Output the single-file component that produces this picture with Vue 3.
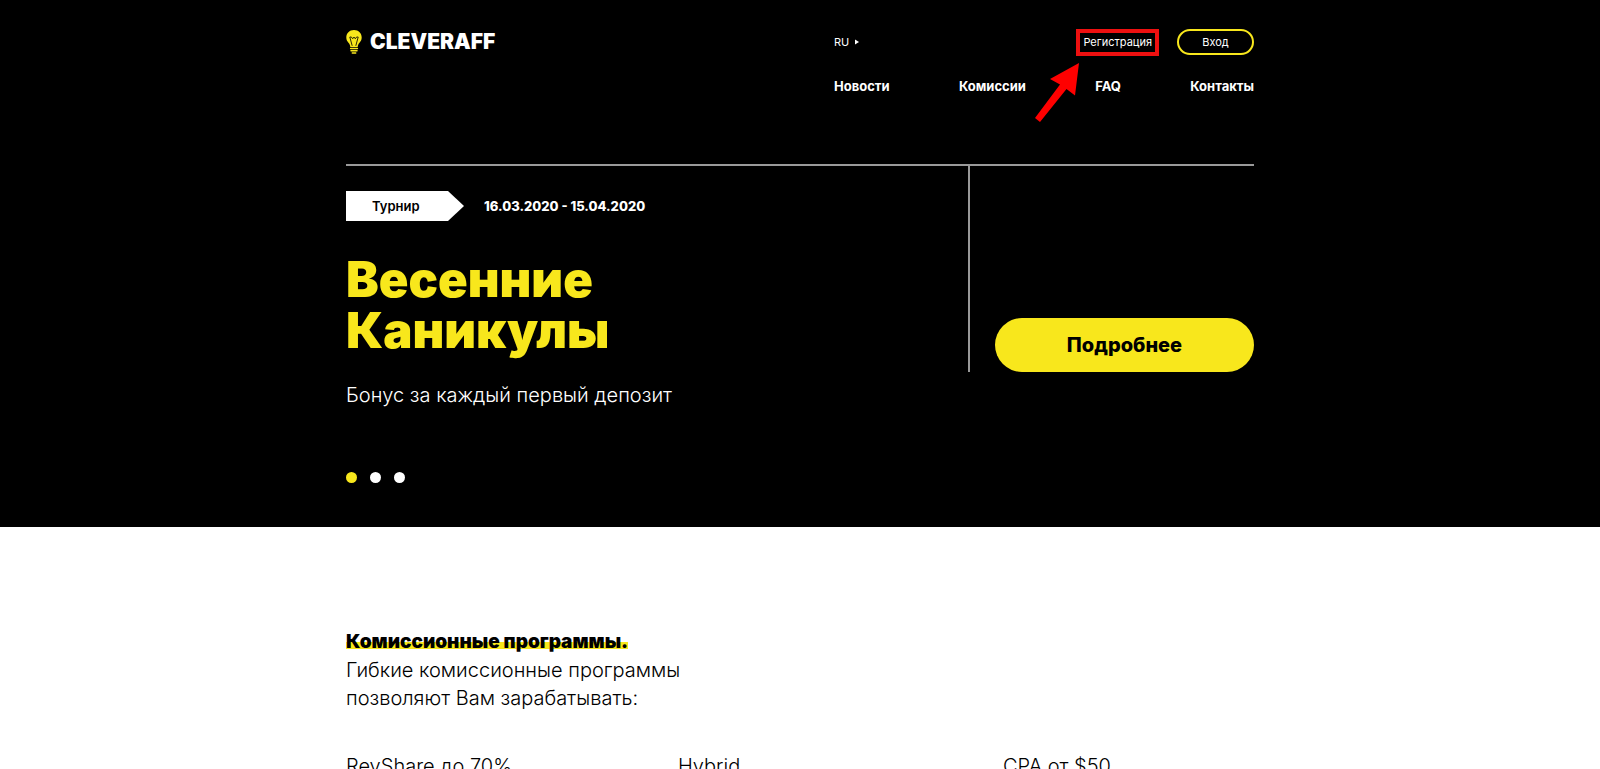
<script setup>
import { ref } from 'vue'

const nav = ['Новости', 'Комиссии', 'FAQ', 'Контакты']
const programs = ['RevShare до 70%', 'Hybrid', 'CPA от $50']
const slides = ['Слайд 1', 'Слайд 2', 'Слайд 3']
const active = ref(0)
</script>

<template>
  <div class="page">
    <div class="dark">
      <div class="container">
        <header class="header">
          <a href="#" class="logo">
            <svg class="bulb" viewBox="0 0 16 24" aria-hidden="true">
              <path d="M8 0C3.4 0 .3 3.400.3 7.500c0 2.500 1.100 4 2.400 5.500.9 1.100 1.400 2.100 1.600 4h7.400c.2-1.900.7-2.900 1.600-4 1.300-1.500 2.400-3 2.400-5.500C15.700 3.400 12.600 0 8 0Z" fill="#f8e71c" />
              <path d="M3.800 7 6.200 15.800M12.200 7 9.800 15.800M3.800 7h1.600l1.300 1.800L8 7l1.300 1.800L10.600 7h1.600" fill="none" stroke="#2c2806" stroke-width="1" />
              <path d="M4.600 18.600h6.800M5 20.800h6M6.300 22.900h3.400" stroke="#f8e71c" stroke-width="1.500" stroke-linecap="round" />
            </svg>
            <span>CLEVERAFF</span>
          </a>
          <div class="head-right">
            <div class="account">
              <button type="button" class="lang">
                RU
                <svg viewBox="0 0 4 6" aria-hidden="true"><path d="M0 0.500 4 3 0 5.500Z" fill="#fff" /></svg>
              </button>
              <div class="auth">
                <div class="register">
                  <a href="#">Регистрация</a>
                  <svg class="arrow" viewBox="0 0 46 60" aria-hidden="true">
                    <path d="M45 1 16 17 26 22.500 1 56 6 60 32.500 27 41 33.500Z" fill="#f00" />
                  </svg>
                </div>
                <button type="button" class="login">Вход</button>
              </div>
            </div>
            <nav class="nav">
              <a v-for="item in nav" :key="item" href="#">{{ item }}</a>
            </nav>
          </div>
        </header>

        <section class="hero">
          <div class="promo">
            <div class="meta">
              <span class="tag">Турнир</span>
              <span class="dates">16.03.2020 - 15.04.2020</span>
            </div>
            <h1>Весенние<br />Каникулы</h1>
            <p>Бонус за каждый первый депозит</p>
          </div>
          <div class="action">
            <button type="button" class="more">Подробнее</button>
          </div>
        </section>

        <div class="dots">
          <button
            v-for="(slide, i) in slides"
            :key="slide"
            type="button"
            :aria-label="slide"
            :class="{ active: active === i }"
            @click="active = i"
          ></button>
        </div>
      </div>
    </div>

    <main class="container programs">
      <h2><span>Комиссионные программы.</span></h2>
      <p class="lead">Гибкие комиссионные программы<br />позволяют Вам зарабатывать:</p>
      <div class="columns">
        <h3 v-for="program in programs" :key="program">{{ program }}</h3>
      </div>
    </main>
  </div>
</template>

<style>
html {
  height: 100%;
  overflow: hidden;
}
body {
  height: 100%;
  margin: 0;
  overflow: hidden;
  background: #fff;
}
</style>

<style scoped>
.page {
  font-family: Inter, "Liberation Sans", sans-serif;
  color: #000;
}
.page * {
  box-sizing: border-box;
}
a {
  color: inherit;
  text-decoration: none;
}
button {
  font: inherit;
  color: inherit;
  background: none;
  border: 0;
  padding: 0;
  cursor: pointer;
}
h1, h2, h3, p {
  margin: 0;
}
.container {
  max-width: 908px;
  margin: 0 auto;
}
.dark {
  background: #000;
  color: #fff;
  padding: 29px 0 44px;
}
.header {
  display: flex;
  justify-content: space-between;
  align-items: flex-start;
  padding-bottom: 68px;
}
.logo {
  display: flex;
  align-items: center;
  gap: 8px;
  font-size: 21px;
  line-height: 26px;
  font-weight: 900;
}
.bulb {
  width: 16px;
  height: 24px;
}
.head-right {
  width: 420px;
}
.account {
  display: flex;
  justify-content: space-between;
  align-items: flex-start;
  font-size: 11px;
}
.lang {
  display: flex;
  align-items: center;
  gap: 6px;
  height: 26px;
}
.lang svg {
  width: 4px;
  height: 6px;
}
.auth {
  display: flex;
  align-items: flex-start;
  gap: 18px;
}
.register {
  position: relative;
  display: flex;
  border: 4px solid #ed1010;
  padding: 0 3px;
  line-height: 19px;
}
.arrow {
  position: absolute;
  top: 29px;
  left: -46px;
  width: 46px;
  height: 60px;
}
.login {
  width: 77px;
  height: 26px;
  border: 2px solid #f8e71c;
  border-radius: 13px;
}
.nav {
  display: flex;
  justify-content: space-between;
  margin-top: 20px;
  font-size: 13px;
  line-height: 20px;
  font-weight: 700;
}
.hero {
  display: grid;
  grid-template-columns: 622px 1fr;
  align-items: start;
  border-top: 2px solid #999;
}
.meta {
  display: flex;
  align-items: center;
  gap: 20px;
  margin-top: 25px;
  font-size: 13px;
  line-height: 30px;
  font-weight: 800;
}
.tag {
  width: 118px;
  padding-left: 26px;
  font-weight: 600;
  background: #fff;
  color: #000;
  clip-path: polygon(0 0, 102px 0, 100% 50%, 102px 100%, 0 100%);
}
h1 {
  margin-top: 33px;
  font-size: 49px;
  line-height: 51px;
  font-weight: 900;
  color: #f8e71c;
}
.promo p {
  margin-top: 25px;
  font-size: 20px;
  line-height: 28px;
  font-weight: 350;
}
.action {
  display: flex;
  align-items: flex-end;
  height: 206px;
  padding-left: 25px;
  border-left: 2px solid #999;
}
.more {
  width: 100%;
  height: 54px;
  border-radius: 27px;
  background: #f8e71c;
  color: #000;
  font-size: 20px;
  font-weight: 800;
}
.dots {
  display: flex;
  gap: 13px;
  margin-top: 63px;
}
.dots button {
  width: 11px;
  height: 11px;
  border-radius: 50%;
  background: #fff;
}
.dots .active {
  background: #f8e71c;
}
.programs {
  padding: 101px 0 40px;
  font-size: 20px;
  line-height: 28px;
}
h2 {
  font-size: 19px;
  line-height: 28px;
  font-weight: 900;
}
h2 span {
  background: linear-gradient(#f8e71c, #f8e71c) 0 12px / 100% 7px no-repeat;
}
.lead,
h3 {
  font-weight: 300;
}
.columns {
  display: grid;
  grid-template-columns: 332px 325px 1fr;
  margin-top: 40px;
}
h3 {
  font-size: 20px;
}
</style>
